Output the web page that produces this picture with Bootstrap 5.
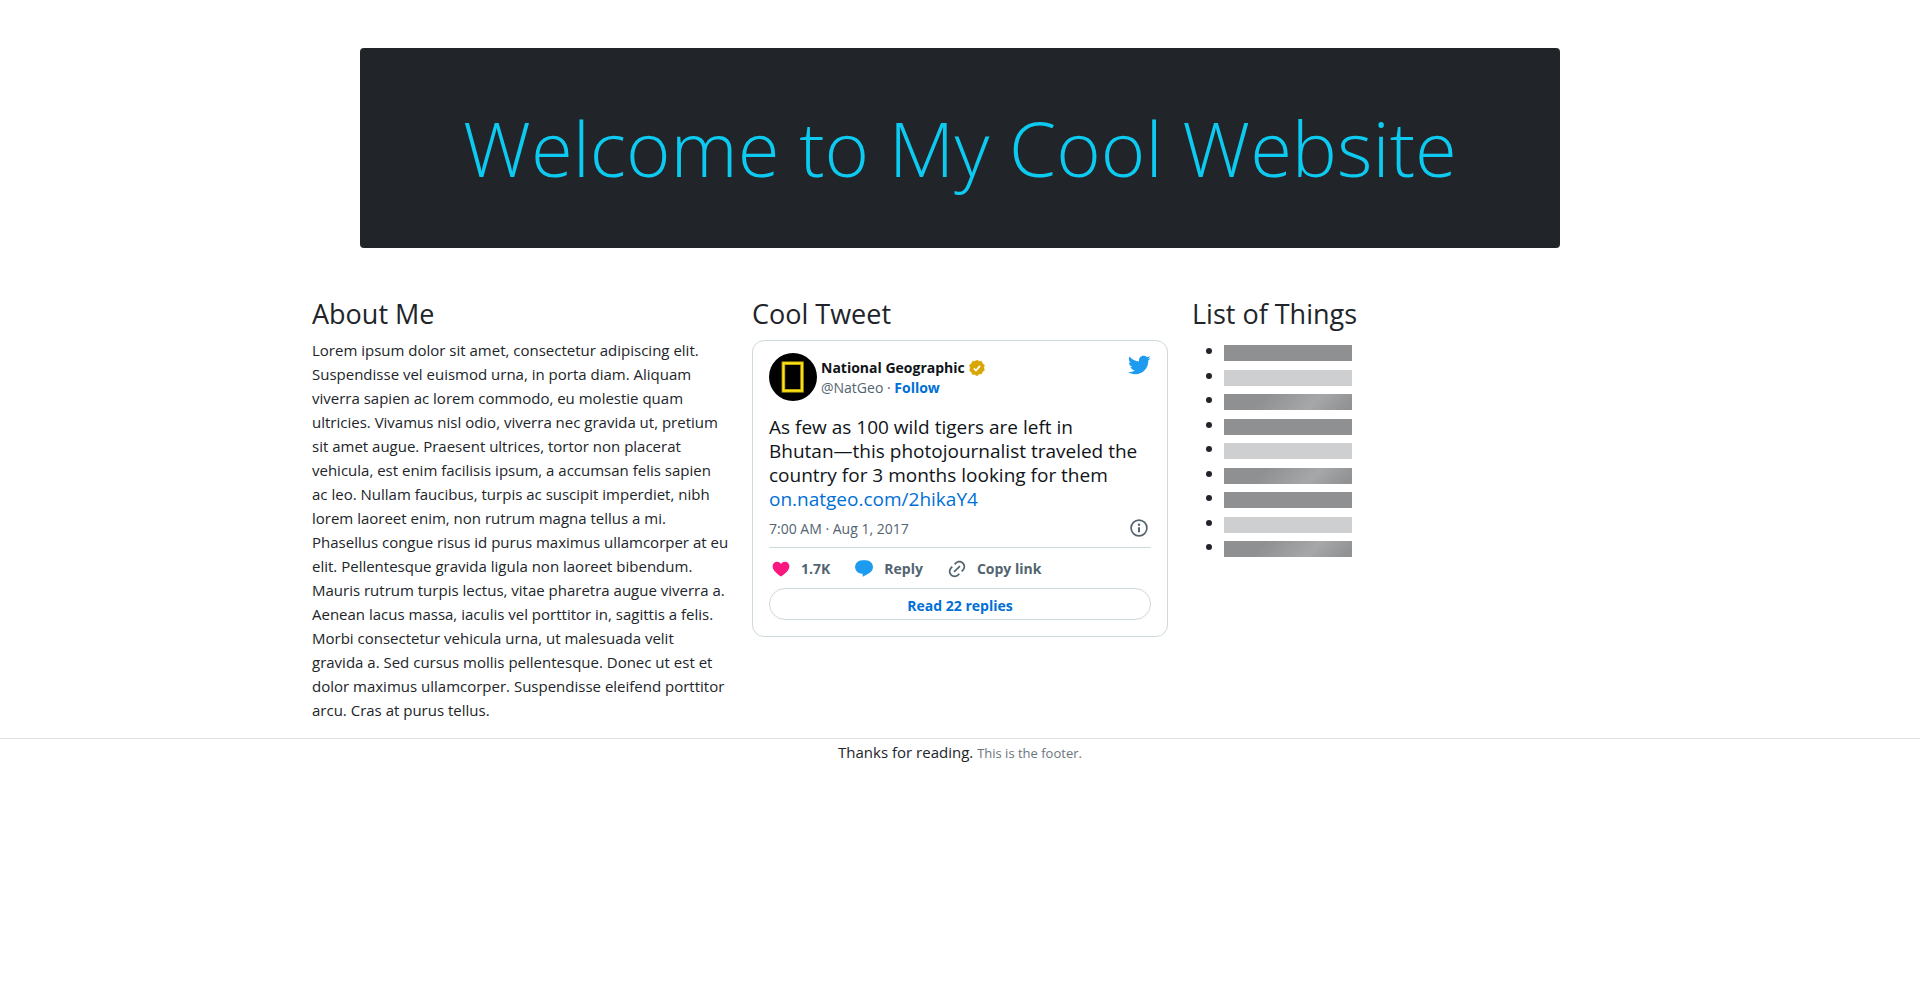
<!DOCTYPE html>
<html lang="en">
<head>
<meta charset="utf-8">
<meta name="viewport" content="width=device-width, initial-scale=1">
<title>My Cool Website</title>
<link href="https://cdn.jsdelivr.net/npm/bootstrap@5.3.0/dist/css/bootstrap.min.css" rel="stylesheet">
<style>
  body { font-family: "Open Sans", "Noto Sans", sans-serif; font-size: 15px; line-height: 24px; color: #212529; }
  .hero { background: #212529; border-radius: 4px; }
  .hero h1 { font-size: 76px; font-weight: 300; line-height: 104px; color: #0dcaf0; }
  h3 { font-size: 27px; font-weight: 400; line-height: 36px; margin-bottom: 6px; }

  .tweet { margin: 8px 0; padding: 12px 16px 16px; border: 1px solid #cfd9de; border-radius: 12px; color: #0f1419; }
  .tweet a { color: #006fd6; text-decoration: none; }
  .tweet .avatar { width: 48px; height: 48px; }
  .tweet .who { font-size: 14px; line-height: 20px; padding-top: 5px; }
  .tweet .who .author { color: #0f1419; }
  .tweet .muted, .tweet .muted a.stamp { color: #536471; }
  .tweet .message { font-size: 19px; line-height: 24px; margin: 14px 0 0; }
  .tweet .meta { font-size: 14px; height: 36px; padding-right: 2px; border-bottom: 1px solid #cfd9de; box-sizing: content-box; }
  .tweet .actions { height: 40px; gap: 24px; padding: 2px 0 0 2px; }
  .tweet .actions button { display: flex; align-items: center; gap: 10px; padding: 0; border: 0; background: none; color: #536471; font-size: 14px; font-weight: 700; line-height: 20px; }
  .tweet .replies { display: block; height: 32px; border: 1px solid #cfd9de; border-radius: 16px; font-size: 14px; font-weight: 700; line-height: 33px; text-align: center; }

  .things { padding-left: 32px; font-size: 16px; }
  .things li:nth-child(odd) { margin-bottom: 1px; }
  .bar { display: inline-block; width: 128px; height: 16px; vertical-align: text-bottom; background: #8f9092; }
  .bar-light { background: #cecfd1; }
  .bar-shine { background: linear-gradient(135deg, #8f9092 30%, #a6a7a9 68%, #919293 95%); }
  footer { border-top: 1px solid #dee2e6; line-height: 26px; }
  footer small { font-size: 13px; color: #6c757d; }
</style>
</head>
<body>
<div class="container">
  <header class="hero m-5 p-5 text-center">
    <h1 class="mb-0">Welcome to My Cool Website</h1>
  </header>
  <main class="row">
    <section class="col-md-4">
      <h3>About Me</h3>
      <p>Lorem ipsum dolor sit amet, consectetur adipiscing elit. Suspendisse vel euismod urna, in porta diam. Aliquam viverra sapien ac lorem commodo, eu molestie quam ultricies. Vivamus nisl odio, viverra nec gravida ut, pretium sit amet augue. Praesent ultrices, tortor non placerat vehicula, est enim facilisis ipsum, a accumsan felis sapien ac leo. Nullam faucibus, turpis ac suscipit imperdiet, nibh lorem laoreet enim, non rutrum magna tellus a mi. <span class="text-nowrap">Phasellus congue risus id purus maximus ullamcorper at eu</span> elit. Pellentesque gravida ligula non laoreet bibendum.<br>Mauris rutrum turpis lectus, vitae pharetra augue viverra a. Aenean lacus massa, iaculis vel porttitor in, sagittis a felis. Morbi consectetur vehicula urna, ut malesuada velit gravida a. Sed cursus mollis pellentesque. Donec ut est et dolor maximus ullamcorper. Suspendisse eleifend porttitor arcu. Cras at purus tellus.</p>
    </section>
    <section class="col-md-4">
      <h3>Cool Tweet</h3>
      <article class="tweet">
        <div class="d-flex align-items-start">
          <svg class="avatar" viewBox="0 0 48 48" role="img" aria-label="National Geographic logo"><circle cx="24" cy="24" r="24" fill="#000"/><rect x="14.400" y="10.200" width="18.600" height="27.600" fill="none" stroke="#b39a12" stroke-width="3.600"/><rect x="14.400" y="10.200" width="18.600" height="27.600" fill="none" stroke="#ffe512" stroke-width="1.800"/></svg>
          <div class="who ms-1 flex-grow-1">
            <div class="d-flex align-items-center gap-1">
              <a href="#" class="author fw-bold">National Geographic</a>
              <svg width="16" height="16" viewBox="0 0 16 16" aria-label="Verified" role="img"><path fill="#d9a704" d="M8 0l2.100 1.300 2.500-.1.9 2.300 2 1.500-.7 2.600.7 2.600-2 1.600-1 2.300-2.400-.1L8 16l-2.100-1.500-2.500.1-.9-2.300-2-1.600.7-2.600L.5 5l2-1.500.9-2.300 2.500.1z" stroke="#d9a704" stroke-width=".4" stroke-linejoin="round"/><path d="M4.800 8.300l2.200 2.200 4-4.600" fill="none" stroke="#fff" stroke-width="1.700"/></svg>
            </div>
            <div class="muted">@NatGeo · <a href="#" class="fw-bold">Follow</a></div>
          </div>
          <a href="#" class="d-flex" aria-label="View on Twitter"><svg width="24" height="24" viewBox="0 0 24 24"><path fill="#1d9bf0" d="M23.643 4.937c-.835.37-1.732.62-2.675.733.962-.576 1.7-1.49 2.048-2.578-.9.534-1.897.922-2.958 1.13-.85-.904-2.06-1.47-3.4-1.47-2.572 0-4.658 2.086-4.658 4.66 0 .364.042.718.12 1.06-3.873-.195-7.304-2.05-9.602-4.868-.4.69-.63 1.49-.63 2.342 0 1.616.823 3.043 2.072 3.878-.764-.025-1.482-.234-2.11-.583v.06c0 2.257 1.605 4.14 3.737 4.568-.392.106-.803.162-1.227.162-.3 0-.593-.028-.877-.082.593 1.85 2.313 3.198 4.352 3.234-1.595 1.25-3.604 1.995-5.786 1.995-.376 0-.747-.022-1.112-.065 2.062 1.323 4.51 2.093 7.14 2.093 8.57 0 13.255-7.098 13.255-13.254 0-.2-.005-.402-.014-.602.91-.658 1.7-1.477 2.323-2.41z"/></svg></a>
        </div>
        <p class="message">As few as 100 wild tigers are left in<br>Bhutan—this photojournalist traveled the country for 3 months looking for them <a href="#">on.natgeo.com/2hikaY4</a></p>
        <div class="meta muted d-flex align-items-center justify-content-between">
          <a href="#" class="stamp">7:00 AM · Aug 1, 2017</a>
          <a href="#" class="stamp d-flex" aria-label="Twitter Ads info and privacy"><svg width="20" height="20" viewBox="0 0 20 20"><circle cx="10" cy="9" r="7.900" fill="none" stroke="#536471" stroke-width="1.700"/><path fill="#536471" d="M9 8.200h2v5H9z"/><circle cx="10" cy="5.800" r="1.200" fill="#536471"/></svg></a>
        </div>
        <div class="actions d-flex align-items-center">
          <button type="button"><svg width="20" height="20" viewBox="0 0 20 20"><path fill="#f91880" d="M10 17.500C7 15.700 1.600 11.800 1.600 7.300 1.600 4.400 3.700 2.700 5.900 2.700c1.700 0 3.200.9 4.100 2.300.9-1.400 2.400-2.300 4.100-2.300 2.200 0 4.300 1.700 4.300 4.600 0 4.500-5.400 8.400-8.400 10.200z"/></svg>1.7K</button>
          <button type="button"><svg width="20" height="20" viewBox="0 0 20 20"><path fill="#1d9bf0" d="M8.200 1.300h3.600c4 0 7.200 3.100 7.200 6.800 0 2.500-1.300 4.600-3.500 5.800L8.700 17.700v-2.900h-.5C4.100 14.800 1.100 11.800 1.100 8.100c0-3.700 3.100-6.800 7.100-6.800z"/></svg>Reply</button>
          <button type="button"><svg width="20" height="20" viewBox="0 0 24 24"><path fill="#536471" d="M18.360 5.640c-1.950-1.960-5.110-1.960-7.070 0L9.880 7.050 8.460 5.640l1.420-1.420c2.730-2.730 7.160-2.730 9.900 0 2.730 2.740 2.730 7.170 0 9.900l-1.420 1.420-1.410-1.420 1.410-1.410c1.960-1.960 1.960-5.120 0-7.070zm-2.120 3.530l-7.070 7.070-1.410-1.410 7.070-7.070 1.410 1.410zm-12.020.710l1.420-1.420 1.410 1.420-1.410 1.410c-1.960 1.960-1.960 5.120 0 7.070 1.950 1.960 5.110 1.960 7.070 0l1.410-1.410 1.420 1.410-1.420 1.420c-2.730 2.730-7.160 2.730-9.900 0-2.730-2.740-2.730-7.170 0-9.900z"/></svg>Copy link</button>
        </div>
        <a href="#" class="replies">Read 22 replies</a>
      </article>
    </section>
    <section class="col-md-4">
      <h3>List of Things</h3>
      <ul class="things">
        <li><span class="bar"></span></li>
        <li><span class="bar bar-light"></span></li>
        <li><span class="bar bar-shine"></span></li>
        <li><span class="bar"></span></li>
        <li><span class="bar bar-light"></span></li>
        <li><span class="bar bar-shine"></span></li>
        <li><span class="bar"></span></li>
        <li><span class="bar bar-light"></span></li>
        <li><span class="bar bar-shine"></span></li>
      </ul>
    </section>
  </main>
</div>
<footer class="text-center">Thanks for reading. <small>This is the footer.</small></footer>
<script src="https://cdn.jsdelivr.net/npm/bootstrap@5.3.0/dist/js/bootstrap.bundle.min.js"></script>
</body>
</html>
